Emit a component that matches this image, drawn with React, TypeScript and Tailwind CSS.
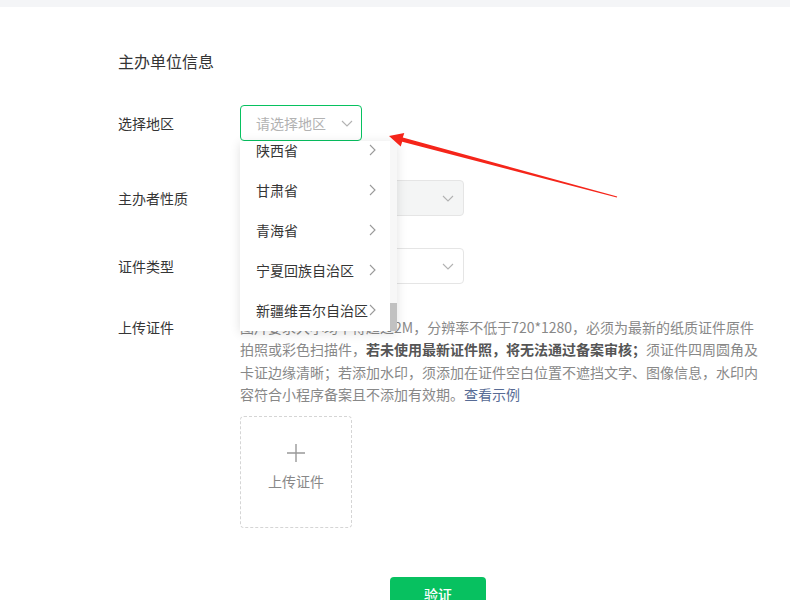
import React from "react";

const font = { fontFamily: '"Noto Sans CJK SC", "Noto Sans", sans-serif' };

function Chevron({ className }: { className?: string }) {
  return (
    <svg className={className} width="12" height="7" viewBox="0 0 12 7" fill="none">
      <path d="M1 1l5 5 5-5" stroke="currentColor" strokeWidth="1.1" />
    </svg>
  );
}

function Right() {
  return (
    <svg width="7" height="12" viewBox="0 0 7 12" fill="none">
      <path d="M1 1l5 5-5 5" stroke="currentColor" strokeWidth="1.1" />
    </svg>
  );
}

const provinces = ["陕西省", "甘肃省", "青海省", "宁夏回族自治区", "新疆维吾尔自治区"];

export default function App() {
  return (
    <div className="relative w-[790px] h-[600px] overflow-hidden bg-white text-[#353535]" style={font}>
      <div className="h-[7px] bg-[#f4f5f7]" />
      <div className="pl-[118px] pt-[42px] flex flex-col">
        <div className="text-[16px] leading-[24px]">主办单位信息</div>

        <div className="mt-[32px] flex items-center h-[36px]">
          <div className="w-[122px] text-[14px]">选择地区</div>
          <div className="relative">
            <div className="w-[122px] h-[36px] border border-[#07c160] rounded-[4px] flex items-center justify-between pl-[15px] pr-[8px] text-[14px] text-[#b2b2b2]">
              <span>请选择地区</span>
              <Chevron className="text-[#b2b2b2]" />
            </div>
            <div className="absolute left-0 top-[36px] z-10 w-[157px] h-[190px] bg-white shadow-[0_2px_10px_rgba(0,0,0,0.12)] overflow-hidden flex">
              <div className="flex-1 overflow-hidden">
                <div className="-mt-[11px]">
                  {provinces.map((p) => (
                    <div key={p} className="h-[40px] flex items-center justify-between pl-[16px] pr-[14px] text-[14px] text-[#353535]">
                      <span className="whitespace-nowrap">{p}</span>
                      <span className="text-[#9a9a9a]"><Right /></span>
                    </div>
                  ))}
                </div>
              </div>
              <div className="w-[7px] bg-[#f7f7f7] flex flex-col justify-end">
                <div className="h-[28px] bg-[#c1c1c1]" />
              </div>
            </div>
          </div>
        </div>

        <div className="mt-[39px] flex items-center h-[36px]">
          <div className="w-[122px] text-[14px]">主办者性质</div>
          <div className="w-[224px] h-[36px] border border-[#e5e5e5] bg-[#f4f5f5] rounded-[4px] flex items-center justify-end pr-[9px]">
            <Chevron className="text-[#b2b2b2]" />
          </div>
        </div>

        <div className="mt-[32px] flex items-center h-[36px]">
          <div className="w-[122px] text-[14px]">证件类型</div>
          <div className="w-[224px] h-[36px] border border-[#e5e5e5] bg-white rounded-[4px] flex items-center justify-end pr-[9px]">
            <Chevron className="text-[#b2b2b2]" />
          </div>
        </div>

        <div className="mt-[32px] flex">
          <div className="w-[122px] text-[14px] leading-[22.4px]">上传证件</div>
          <div className="flex flex-col">
            <div className="text-[14px] leading-[22.4px] text-[#888888] whitespace-nowrap">
              <div>图片要求大小均不得超过2M，分辨率不低于720*1280，必须为最新的纸质证件原件</div>
              <div>
                拍照或彩色扫描件，<span className="font-bold text-[#555555]">若未使用最新证件照，将无法通过备案审核；</span>须证件四周圆角及
              </div>
              <div>卡证边缘清晰；若添加水印，须添加在证件空白位置不遮挡文字、图像信息，水印内</div>
              <div>
                容符合小程序备案且不添加有效期。<span className="text-[#576b95]">查看示例</span>
              </div>
            </div>
            <div className="mt-[10px] w-[112px] h-[112px] border border-dashed border-[#d5d5d5] rounded-[4px] flex flex-col items-center justify-center">
              <svg width="20" height="20" viewBox="0 0 20 20" className="mt-[-8px]">
                <path d="M10 1v18M1 10h18" stroke="#999999" strokeWidth="1.4" />
              </svg>
              <div className="mt-[8px] text-[14px] text-[#888888]">上传证件</div>
            </div>
          </div>
        </div>

        <div className="mt-[49px] pl-[272px]">
          <div className="w-[96px] h-[36px] bg-[#07c160] rounded-[4px] flex items-center justify-center text-white text-[14px] font-medium">
            验证
          </div>
        </div>
      </div>

      <svg className="absolute left-0 top-0 pointer-events-none z-20" width="790" height="600" viewBox="0 0 790 600">
        <polygon points="389,136 404.3,133 402.8,137.6 617.2,196.6 616.8,197.6 402.2,141.8 400.7,146.5" fill="#f5251a" />
      </svg>
    </div>
  );
}
